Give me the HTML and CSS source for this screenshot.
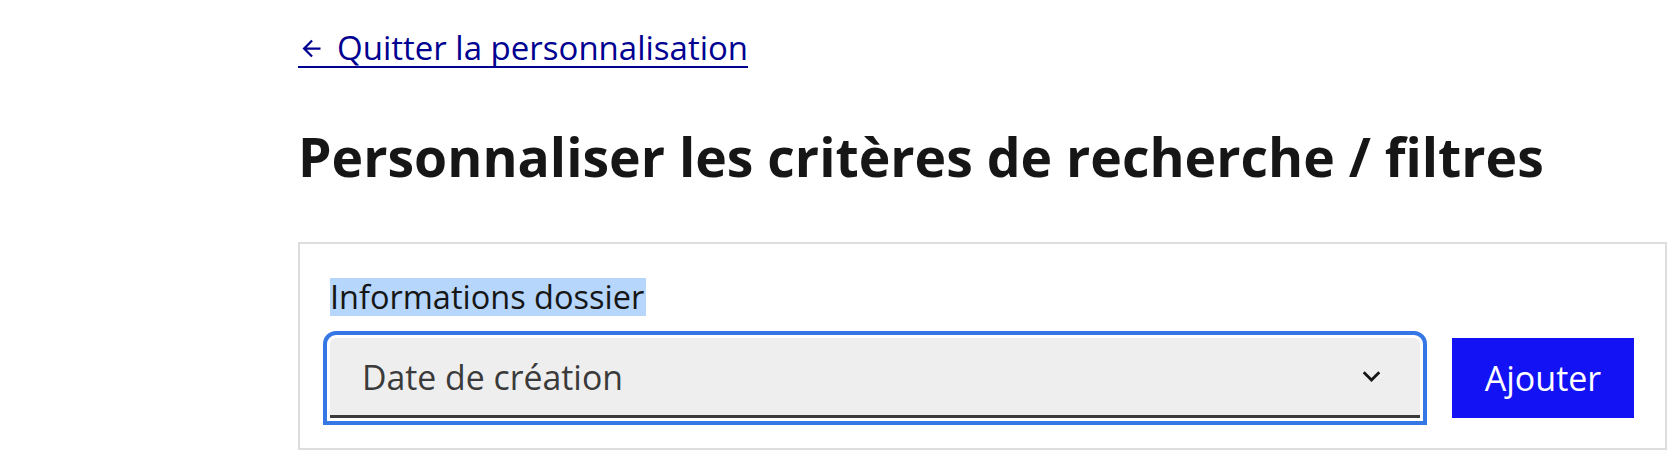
FILE: index.html
```html
<!DOCTYPE html>
<html lang="fr">
<head>
<meta charset="utf-8">
<title>Personnaliser les critères de recherche / filtres</title>
<link rel="stylesheet" href="styles.css">
</head>
<body>
<main class="page">
  <a class="back-link" href="#">
    <svg class="back-icon" viewBox="0 0 24 24" aria-hidden="true"><path d="M7.828 11H20v2H7.828l5.364 5.364-1.414 1.414L4 12l7.778-7.778 1.414 1.414L7.828 11z"/></svg>
    <span>Quitter la personnalisation</span>
  </a>
  <h1 class="title">Personnaliser les critères de recherche / filtres</h1>
  <form class="panel">
    <div class="field">
      <label class="field-label"><span class="label-text">Informations dossier</span></label>
      <div class="select" tabindex="0">
        <span class="select-value">Date de création</span>
        <svg class="select-chevron" viewBox="0 0 24 24" aria-hidden="true"><path d="M12 13.172l4.95-4.95 1.414 1.414L12 16 5.636 9.636 7.05 8.222z"/></svg>
      </div>
    </div>
    <button class="btn" type="button">Ajouter</button>
  </form>
</main>
</body>
</html>
```
FILE: styles.css
```css
* { box-sizing: border-box; }
html, body { margin: 0; padding: 0; background: #ffffff; }
body {
  font-family: "Open Sans", "Noto Sans", sans-serif;
  color: #161616;
}
.page {
  padding: 30px 12px 0 298px;
  display: flex;
  flex-direction: column;
  align-items: flex-start;
}
.back-link {
  display: inline-flex;
  align-items: center;
  color: #000091;
  text-decoration: none;
  font-size: 33px;
  line-height: 36px;
  border-bottom: 2px solid #000091;
}
.back-icon {
  width: 27px;
  height: 27px;
  fill: #000091;
  margin-right: 12px;
}
.title {
  margin: 57px 0 0 0;
  font-size: 53.5px;
  line-height: 64px;
  font-weight: 700;
  color: #161616;
}
.panel {
  align-self: stretch;
  margin-top: 53px;
  border: 2px solid #dddddd;
  padding: 34px 31px 30px 30px;
  display: flex;
  align-items: flex-end;
  gap: 32px;
}
.field {
  flex: 1;
  display: flex;
  flex-direction: column;
  gap: 22px;
}
.field-label {
  font-size: 32.5px;
  line-height: 38px;
}
.label-text {
  display: inline-block;
  background: #b6d6fc;
  padding-right: 2px;
}
.select {
  height: 80px;
  background: #eeeeee;
  border-radius: 6px 6px 0 0;
  box-shadow: inset 0 -3px 0 0 #3a3a3a;
  display: flex;
  align-items: center;
  justify-content: space-between;
  padding: 0 32px 3px 32px;
  outline: 4px solid #3578e5;
  outline-offset: 3px;
  color: #3a3a3a;
  font-size: 33.8px;
}
.select-chevron {
  width: 33px;
  height: 33px;
  fill: #161616;
}
.btn {
  width: 182px;
  height: 80px;
  background: #1212f5;
  color: #ffffff;
  border: 0;
  padding: 0;
  font-family: inherit;
  font-size: 34px;
  cursor: pointer;
}
```
